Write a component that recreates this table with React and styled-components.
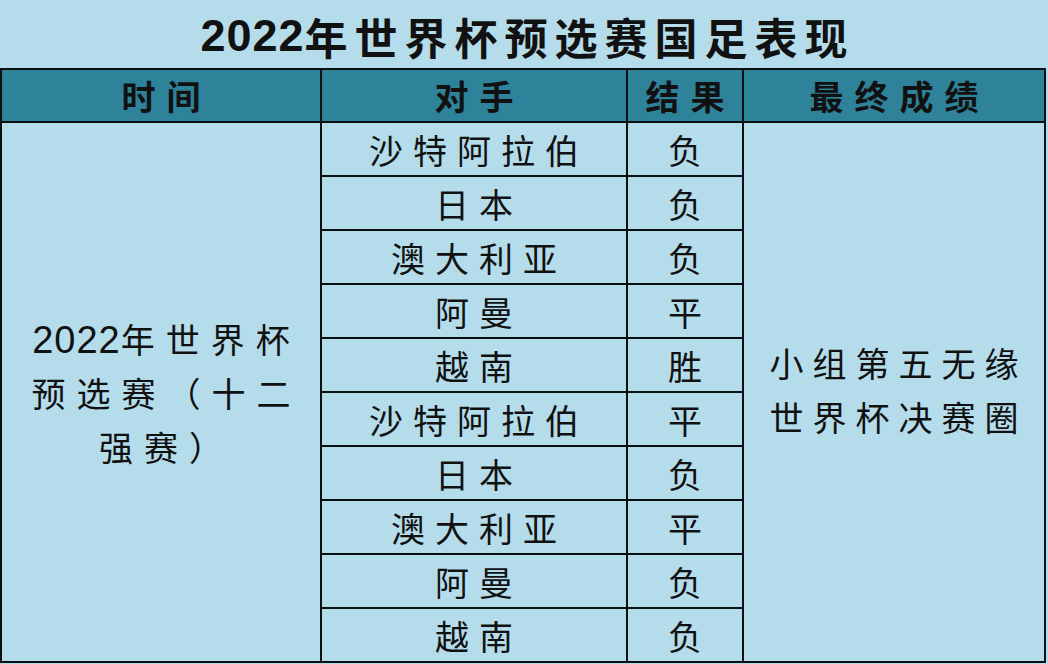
import React from "react";
import styled, { createGlobalStyle } from "styled-components";

const GlobalStyle = createGlobalStyle`
  html, body {
    margin: 0;
    padding: 0;
    background: #b5dcea;
  }
`;

const Page = styled.div`
  width: 1048px;
  height: 664px;
  background: #b5dcea;
  font-family: "Liberation Sans", "Noto Sans CJK SC", sans-serif;
  color: #111;
  overflow: hidden;
`;

const Title = styled.div`
  height: 68px;
  display: flex;
  align-items: center;
  justify-content: center;
  font-size: 43px;
  font-weight: 700;
  letter-spacing: 7px;
  padding-left: 7px;
  padding-top: 4px;
  box-sizing: border-box;
`;

const Digits = styled.span`
  letter-spacing: ${p => p.$spacing || 1}px;
  font-size: ${p => p.$size ? `${p.$size}px` : "inherit"};
`;

const Grid = styled.div`
  width: 1046px;
  display: grid;
  grid-template-columns: 318px 304px 114px 300px;
  grid-template-rows: 51px repeat(10, 52px);
  gap: 2px;
  padding: 2px;
  box-sizing: border-box;
  background: #0a0f12;
`;

const Head = styled.div`
  background: #2e8299;
  display: flex;
  align-items: center;
  justify-content: center;
  font-size: 34px;
  font-weight: 700;
  letter-spacing: 11px;
  padding-left: 11px;
`;

const Cell = styled.div`
  background: #b5dcea;
  display: flex;
  align-items: center;
  justify-content: center;
  font-size: 34px;
  font-weight: 400;
  letter-spacing: 10px;
  padding-left: 10px;
`;

const SpanCell = styled.div`
  grid-column: ${p => p.$col};
  grid-row: 2 / span 10;
  background: #b5dcea;
  display: flex;
  flex-direction: column;
  align-items: center;
  justify-content: center;
  font-size: 34px;
  line-height: 54px;
  letter-spacing: ${p => p.$spacing}px;
  padding-left: ${p => p.$spacing}px;
  padding-top: ${p => p.$offset || 0}px;
`;

const Line = styled.div`
  white-space: nowrap;
`;

const matches = [
  ["沙特阿拉伯", "负"],
  ["日本", "负"],
  ["澳大利亚", "负"],
  ["阿曼", "平"],
  ["越南", "胜"],
  ["沙特阿拉伯", "平"],
  ["日本", "负"],
  ["澳大利亚", "平"],
  ["阿曼", "负"],
  ["越南", "负"],
];

export default function App() {
  return (
    <Page>
      <GlobalStyle />
      <Title>
        <Digits $size={45}>2022</Digits>年世界杯预选赛国足表现
      </Title>
      <Grid>
        <Head>时间</Head>
        <Head>对手</Head>
        <Head>结果</Head>
        <Head>最终成绩</Head>

        <SpanCell $col={1} $spacing={11} $offset={4}>
          <Line><Digits $size={38}>2022</Digits>年世界杯</Line>
          <Line>预选赛（十二</Line>
          <Line>强赛）</Line>
        </SpanCell>

        {matches.map(([team, result], i) => (
          <React.Fragment key={i}>
            <Cell style={{ gridColumn: 2, gridRow: i + 2 }}>{team}</Cell>
            <Cell style={{ gridColumn: 3, gridRow: i + 2 }}>{result}</Cell>
          </React.Fragment>
        ))}

        <SpanCell $col={4} $spacing={9} $offset={0}>
          <Line>小组第五无缘</Line>
          <Line>世界杯决赛圈</Line>
        </SpanCell>
      </Grid>
    </Page>
  );
}
